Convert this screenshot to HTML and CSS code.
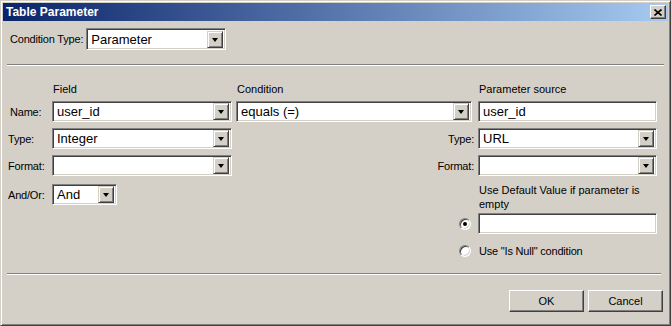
FILE: index.html
```html
<!DOCTYPE html>
<html>
<head>
  <title>Table Parameter</title>
  <link rel="stylesheet" href="styles.css">
</head>
<body>
  <div class="window">
    <div class="titlebar">
      <span class="title">Table Parameter</span>
      <div class="close">
        <svg width="8" height="7" viewBox="0 0 8 7"><path d="M0.5 0.5 L7.5 6.5 M7.5 0.5 L0.5 6.5" stroke="#000" stroke-width="1.6"/></svg>
      </div>
    </div>

    <div class="content">
      <div class="toprow">
        <label>Condition Type:</label>
        <div class="select w-ctype"><span>Parameter</span><div class="arrow"></div></div>
      </div>

      <div class="sep"></div>

      <div class="grid">
        <div></div>
        <div class="head">Field</div>
        <div class="head">Condition</div>
        <div class="head">Parameter source</div>

        <label class="first">Name:</label>
        <div class="select w-field"><span>user_id</span><div class="arrow"></div></div>
        <div class="select w-cond"><span>equals (=)</span><div class="arrow"></div></div>
        <div class="textbox"><span>user_id</span></div>

        <label>Type:</label>
        <div class="select w-field"><span>Integer</span><div class="arrow"></div></div>
        <label class="right">Type:</label>
        <div class="select"><span>URL</span><div class="arrow"></div></div>

        <label>Format:</label>
        <div class="select w-field"><span></span><div class="arrow"></div></div>
        <label class="right">Format:</label>
        <div class="select"><span></span><div class="arrow"></div></div>

        <label>And/Or:</label>
        <div class="select w-andor"><span>And</span><div class="arrow"></div></div>
        <div></div>
        <div class="note">Use Default Value if parameter is empty</div>

        <div></div>
        <div></div>
        <div class="radio checked"></div>
        <div class="textbox"><span></span></div>

        <div></div>
        <div></div>
        <div class="radio"></div>
        <label class="plain">Use "Is Null" condition</label>
      </div>

      <div class="sep bottom"></div>

      <div class="buttons">
        <button>OK</button>
        <button>Cancel</button>
      </div>
    </div>
  </div>
</body>
</html>
```

FILE: styles.css
```css
body {
  margin: 0;
  background: #d4d0c8;
  font-family: "Liberation Sans", Arial, sans-serif;
}

.window {
  width: 671px;
  height: 326px;
  box-sizing: border-box;
  background: #d4d0c8;
  border: 1px solid;
  border-color: #d4d0c8 #404040 #404040 #d4d0c8;
  box-shadow: inset 1px 1px #fff, inset -1px -1px #808080;
  padding: 2px;
  display: flex;
  flex-direction: column;
}

.titlebar {
  height: 18px;
  background: linear-gradient(to right, #0a246a, #a6caf0);
  display: flex;
  align-items: center;
  justify-content: space-between;
  padding: 0 2px 0 3px;
}

.title {
  color: #fff;
  font-weight: bold;
  font-size: 12px;
}

.close {
  width: 16px;
  height: 14px;
  box-sizing: border-box;
  background: #d4d0c8;
  border: 1px solid;
  border-color: #fff #404040 #404040 #fff;
  box-shadow: inset -1px -1px #808080;
  display: flex;
  align-items: center;
  justify-content: center;
}

.content {
  padding: 7px 5px 0 5px;
  font-size: 11px;
  color: #000;
}

label {
  font-size: 11px;
  white-space: nowrap;
  letter-spacing: -0.2px;
}

.toprow {
  display: flex;
  align-items: center;
  gap: 3px;
  padding-left: 2px;
}

.sep {
  height: 1px;
  background: #808080;
  border-bottom: 1px solid #fff;
  margin: 14px -1px 0 -1px;
}

.sep.bottom {
  margin-top: 12px;
  margin-right: 2px;
}

.select, .textbox {
  height: 21px;
  box-sizing: border-box;
  background: #fff;
  border: 1px solid;
  border-color: #808080 #fff #fff #808080;
  box-shadow: inset 1px 1px #404040, inset -1px -1px #d4d0c8;
  display: flex;
  align-items: center;
  padding: 2px;
  font-size: 13px;
}

.toprow .select {
  height: 22px;
}

.select span, .textbox span {
  flex: 1;
  padding-left: 2px;
  line-height: 17px;
  white-space: nowrap;
}

.arrow {
  width: 16px;
  height: 17px;
  box-sizing: border-box;
  background: #d4d0c8;
  border: 1px solid;
  border-color: #d4d0c8 #404040 #404040 #d4d0c8;
  box-shadow: inset 1px 1px #fff, inset -1px -1px #808080;
  display: flex;
  align-items: center;
  justify-content: center;
}

.arrow::after {
  content: "";
  border-left: 3.5px solid transparent;
  border-right: 3.5px solid transparent;
  border-top: 4px solid #000;
  margin-top: 1px;
}

.w-ctype { width: 140px; }
.w-field { width: 180px; }
.w-cond { width: 236px; }
.w-andor { width: 65px; }

.grid {
  display: grid;
  grid-template-columns: 44px 184px 242px 179px;
  grid-template-rows: 15px 21px 21px 21px 25px 21px 21px;
  row-gap: 6px;
  margin-top: 14px;
  align-items: center;
}

.grid label.first {
  padding-left: 2px;
}

.head {
  padding-left: 1px;
  align-self: end;
}

.grid label.right {
  justify-self: end;
  padding-right: 4px;
}

.grid label.plain {
  padding-left: 1px;
}

.note {
  align-self: start;
  line-height: 14px;
  padding-left: 1px;
  margin-top: 1px;
}

.radio {
  width: 12px;
  height: 12px;
  box-sizing: border-box;
  border-radius: 50%;
  background: #fff;
  border: 1px solid;
  border-color: #808080 #fff #fff #808080;
  box-shadow: inset 1px 1px #404040, inset -1px -1px #d4d0c8;
  justify-self: end;
  margin-right: 7px;
  display: flex;
  align-items: center;
  justify-content: center;
}

.radio.checked::after {
  content: "";
  width: 4px;
  height: 4px;
  border-radius: 50%;
  background: #000;
}

.buttons {
  display: flex;
  justify-content: flex-end;
  gap: 4px;
  margin-top: 15px;
}

button {
  width: 75px;
  height: 22px;
  box-sizing: border-box;
  background: #d4d0c8;
  border: 1px solid;
  border-color: #fff #404040 #404040 #fff;
  box-shadow: inset -1px -1px #808080;
  font-family: "Liberation Sans", Arial, sans-serif;
  font-size: 11px;
  color: #000;
  padding: 0;
}
```
